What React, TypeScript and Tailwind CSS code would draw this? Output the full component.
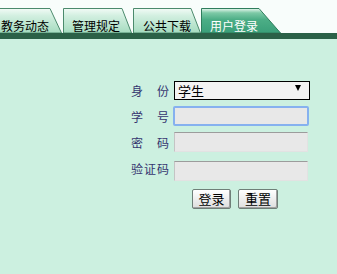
import React from "react";

const font = { fontFamily: '"Noto Sans CJK SC", "Noto Sans", sans-serif' };

type TabProps = {
  label: string;
  width: number;
  slant: number;
  active?: boolean;
  className?: string;
};

function Tab({ label, width, slant, active, className }: TabProps) {
  const h = 25;
  const id = active ? "tab-active" : "tab-idle";
  return (
    <div className={`relative h-[25px] shrink-0 ${className ?? ""}`} style={{ width }}>
      <svg className="absolute inset-0" width={width} height={h} viewBox={`0 0 ${width} ${h}`}>
        <defs>
          <linearGradient id={id} x1="0" y1="0" x2="0" y2="1">
            {active ? (
              <>
                <stop offset="0" stopColor="#e8f7ef" />
                <stop offset="0.18" stopColor="#7cc9a6" />
                <stop offset="0.45" stopColor="#4cae86" />
                <stop offset="1" stopColor="#3a9f79" />
              </>
            ) : (
              <>
                <stop offset="0" stopColor="#f2fbf6" />
                <stop offset="0.3" stopColor="#d2efe0" />
                <stop offset="1" stopColor="#a5dbbf" />
              </>
            )}
          </linearGradient>
        </defs>
        <polygon
          points={`0.5,${h} 0.5,0.5 ${width - slant},0.5 ${width - 0.5},${h}`}
          fill={`url(#${id})`}
          stroke={active ? "#2f7d5c" : "#4b8a6c"}
          strokeWidth="1"
        />
      </svg>
      <div
        className={`relative flex h-full items-end pb-[1px] text-[12px] leading-[13px] ${
          active ? "justify-center pr-[14px] text-white" : "text-black"
        }`}
        style={font}
      >
        {label}
      </div>
    </div>
  );
}

function Row({ label, children, boxClass }: { label: string; children: React.ReactNode; boxClass?: string }) {
  return (
    <div className="flex h-[26px]">
      <div className="flex h-full w-[43px] items-center text-[12px] tracking-[1px] text-[#35356f]" style={font}>
        {label}
      </div>
      <div className={boxClass}>{children}</div>
    </div>
  );
}

const plainInput =
  "h-[20px] w-[134px] border border-t-[#9c9c9c] border-l-[#c4c4c4] border-r-[#e2e2e2] border-b-[#e2e2e2] bg-[#e8e8e8] outline-none";

const btn =
  "h-[20px] rounded-[2px] border border-[#6f7f78] bg-gradient-to-b from-white to-[#dedede] text-[13px] leading-[16px] text-black shadow-[inset_-1px_-1px_0_#a0a0a0]";

export default function App() {
  return (
    <div className="flex h-[274px] w-[337px] flex-col overflow-hidden bg-[#ccf0e0]">
      {/* tab strip */}
      <div className="flex h-[33px] items-end bg-[#f8fdfb]">
        <Tab label="教务动态" width={64} slant={12} className="pl-[1px] [&>svg]:-left-[2px]" />
        <Tab label="管理规定" width={69} slant={10} className="-ml-[1px] [&>div]:pl-[9px]" />
        <Tab label="公共下载" width={68} slant={10} className="ml-[1px] [&>div]:pl-[10px]" />
        <Tab label="用户登录" width={80} slant={22} active />
      </div>
      <div className="h-[6px] bg-[#2b6147]" />

      {/* login form */}
      <div className="flex flex-col pl-[131px] pt-[39px]">
        <Row label="身　份">
          <div className="relative">
            <select
              className="h-[19px] w-[136px] appearance-none border border-black bg-[#f3f3f3] pl-[3px] text-[13px] leading-[17px] text-black outline-none"
              style={font}
              defaultValue="学生"
            >
              <option>学生</option>
              <option>教师</option>
            </select>
            <svg className="pointer-events-none absolute right-[9px] top-[7px]" width="6" height="6" viewBox="0 0 6 6">
              <polygon points="0,0 6,0 3,6" fill="#000" />
            </svg>
          </div>
        </Row>
        <Row label="学　号" boxClass="-ml-[1px]">
          <input className="h-[20px] w-[136px] rounded-[2px] border-2 border-[#86b1ef] bg-[#e8e8e8] outline-none" />
        </Row>
        <Row label="密　码">
          <input type="password" className={plainInput} />
        </Row>
        <Row label="验证码" boxClass="pt-[3px]">
          <input className={plainInput} />
        </Row>

        <div className="ml-[61px] mt-[7px] flex gap-[7px]">
          <button className={`${btn} w-[39px]`} style={font}>
            登录
          </button>
          <button className={`${btn} w-[40px]`} style={font}>
            重置
          </button>
        </div>
      </div>
    </div>
  );
}
